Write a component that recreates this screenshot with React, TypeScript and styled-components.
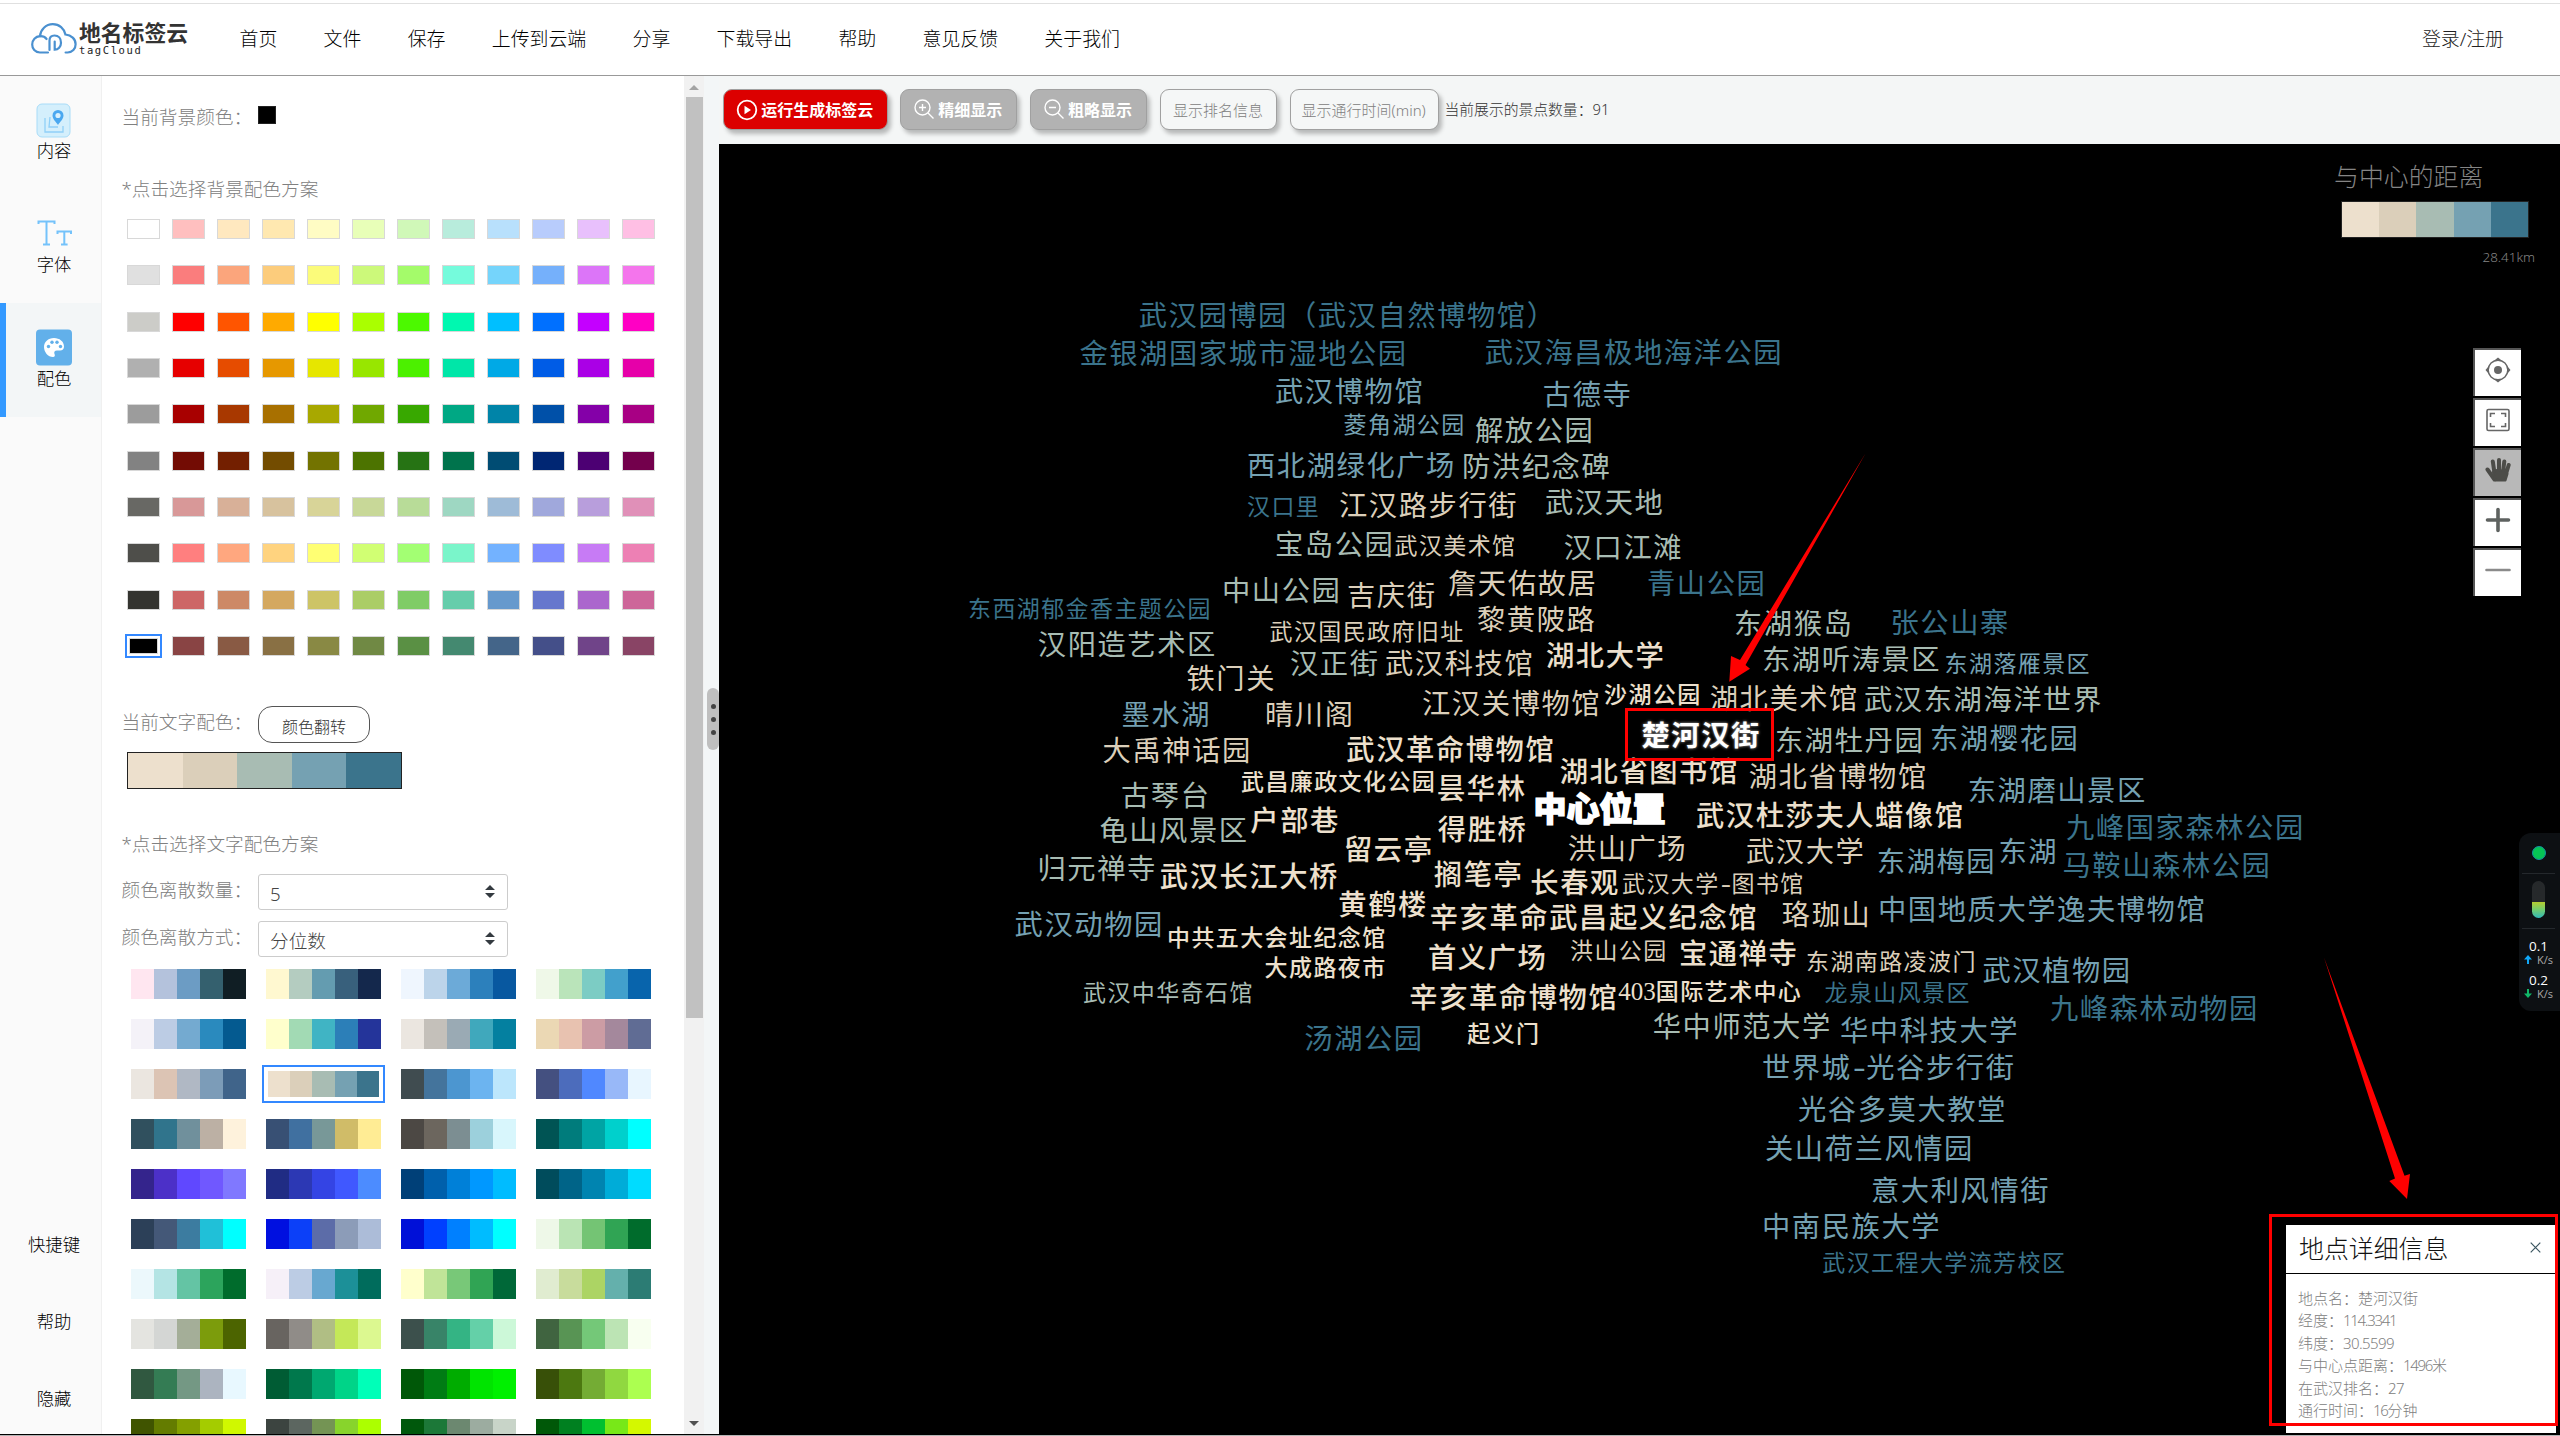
import React from "react";
import styled, { createGlobalStyle } from "styled-components";

const Global = createGlobalStyle`
  * { box-sizing: border-box; }
  html, body { margin: 0; padding: 0; }
  body {
    width: 2560px;
    height: 1436px;
    overflow: hidden;
    background: #fff;
    font-family: "Noto Sans", "Noto Sans CJK SC", sans-serif;
    font-weight: 300;
  }
`;

/* ---------- data ---------- */

const navItems = ["首页", "文件", "保存", "上传到云端", "分享", "下载导出", "帮助", "意见反馈", "关于我们"];

const backgrounds = [
  "#ffffff #ffbfbf #ffe8bf #ffe8b0 #fffcc4 #e8ffb8 #d0f8b8 #b8ecdc #b8e0fc #b8ccfc #e8c0fc #ffbfe4",
  "#e0e0e0 #fa7d7d #fba57c #fccc7c #fbfb7a #ccf97a #a4fb6a #75fbdc #75d4fb #75b0fb #dc75f8 #f475ec",
  "#ccccc8 #ff0000 #ff5500 #ffaa00 #ffff00 #aaff00 #4cf900 #00f8b0 #00bfff #0070ff #c400ff #ff00c4",
  "#b0b0b0 #e60000 #e64c00 #e69800 #e6e600 #98e600 #4cf000 #00e6a8 #00a9e6 #005ce6 #aa00e6 #e600a9",
  "#9c9c9c #a80000 #a83800 #a87000 #a8a800 #70a800 #38a800 #00a884 #0084a8 #0050a8 #8400a8 #a80084",
  "#828282 #730c04 #731f00 #734c00 #737300 #4c7300 #267314 #00734c #004c73 #002673 #4c0073 #73004c",
  "#686864 #d89898 #d8b098 #d7c29e #d8d498 #c8d898 #b8dc98 #9ed7c2 #9ebbd7 #a0a8dc #b89edc #e090b8",
  "#4e4e4a #ff7f7f #ffa77f #ffd37f #ffff73 #d1ff73 #a3ff73 #7af5ca #73b2ff #7f8cff #c77bf5 #ed80b4",
  "#343430 #cd6666 #cd8966 #d4a860 #cdc466 #abcd66 #80cc66 #66cdab #6699cd #6677cd #ab66cd #cd6699",
  "#000000 #894444 #895a44 #897044 #898944 #708944 #5a9044 #448970 #446589 #444f89 #704489 #894465",
].flatMap((row) => row.split(" "));

const current = ["#ede0cd", "#dbcfba", "#a8bcb3", "#75a1b2", "#3b748c"];

const palettes = [
  "#ffe6f0 #b4c2dc #6c9cc4 #34606e #101e24",
  "#fff8d0 #b4ccc0 #649cb0 #38607c #14284c",
  "#eff6fe #bcd4ea #6caad8 #2c80bc #0858a0",
  "#eff8e8 #bae4ba #7cccc4 #42a0cc #0864ac",
  "#f4f2f8 #bccce4 #74aad0 #2a8abe #045a90",
  "#ffffcc #a2dab4 #40b4c4 #2c7fb8 #24349a",
  "#ebe6e0 #c4c0ba #9aaab4 #40a8bc #0480a0",
  "#ebd8b4 #e8c2b0 #cc9ca4 #a4889c #606c94",
  "#ebe6e0 #dcc4b4 #b0b8c4 #7c9cb8 #40648a",
  "#ede0cd #dbcfba #a8bcb3 #75a1b2 #3b748c",
  "#404c50 #44749c #4c96d0 #6cb4f0 #bce6fc",
  "#445080 #4c6cbc #5088ff #98b8f8 #e8f6ff",
  "#30505e #30748c #70909c #bcb0a4 #fef2dc",
  "#385074 #4070a0 #789898 #d0bc68 #ffec94",
  "#4c4844 #6c665e #7c8e92 #9cd0dc #d8f6fc",
  "#005454 #007c7c #00a4a4 #00d0cc #00ffff",
  "#34248c #4c30c8 #6048ff #7058ff #8078ff",
  "#202c84 #2c38b4 #3444e4 #4058ff #4c8cff",
  "#004078 #0060ac #0080d8 #0098ff #00bcff",
  "#004c5c #006488 #0084b0 #00acd8 #00dcff",
  "#2c4058 #445878 #3c7ca0 #20c0d8 #00ffff",
  "#0010e0 #0c40f8 #5c6ca8 #8c9cb8 #acbcd8",
  "#0010d8 #0040ff #0080ff #00bcff #00ffff",
  "#eef8e8 #bae4b4 #74c474 #30a454 #006c2c",
  "#ecf8fc #b4e4e4 #64c4a4 #2ca45c #006c2c",
  "#f6f0f8 #bccce4 #68a8d0 #1c9098 #006c5c",
  "#ffffcc #c0e498 #78c878 #30a454 #006838",
  "#e0ecd0 #c8dc9c #acd464 #64b0ac #2c7c74",
  "#e4e4e0 #d4d6d4 #a4ae98 #7c9c0c #4c6400",
  "#686460 #908c88 #b0be84 #c4e858 #dcf890",
  "#3c504c #388468 #34b484 #64d0a8 #ccf8d8",
  "#406440 #589454 #74c878 #bce4b4 #f8fff0",
  "#305840 #347c54 #749884 #acb4c0 #e8f8ff",
  "#005c34 #00784c #00a870 #00d488 #00ffb8",
  "#005808 #007c14 #00ac00 #00e400 #00f000",
  "#385008 #4c7810 #74ac34 #90d840 #acff50",
  "#405400 #647c00 #84a000 #a4cc00 #d0f800",
  "#3c4440 #5c6660 #749454 #88d42c #acff00",
  "#00580c #1c7838 #6c8870 #9caca0 #c8d4c8",
  "#005808 #008020 #00c030 #78e818 #d4f800",
].map((p) => p.split(" "));

type Tone = "A" | "B" | "C" | "D" | "E";
const tones: Record<Tone, string> = { A: current[0], B: current[1], C: current[2], D: current[3], E: current[4] };

/* [name, left, vertical centre, tone, small?] */
const places: [string, number, number, Tone, boolean?][] = [
  ["武汉园博园（武汉自然博物馆）", 1139.7, 315, "E"],
  ["金银湖国家城市湿地公园", 1080.4, 353.3, "E"],
  ["武汉海昌极地海洋公园", 1485.7, 352.7, "E"],
  ["武汉博物馆", 1276, 391.7, "D"],
  ["古德寺", 1543.8, 394, "D"],
  ["菱角湖公园", 1344.6, 424.3, "D", true],
  ["解放公园", 1476, 430.7, "C"],
  ["西北湖绿化广场", 1248, 465.7, "D"],
  ["防洪纪念碑", 1463, 466.7, "C"],
  ["汉口里", 1248, 506.7, "E", true],
  ["江汉路步行街", 1340, 505.3, "B"],
  ["武汉天地", 1546, 502.7, "C"],
  ["宝岛公园", 1276, 544, "C"],
  ["武汉美术馆", 1395.5, 545.3, "B", true],
  ["汉口江滩", 1564.7, 547.7, "C"],
  ["中山公园", 1223, 590.7, "C"],
  ["吉庆街", 1348, 595.3, "B"],
  ["詹天佑故居", 1449, 583.3, "B"],
  ["青山公园", 1648, 583.7, "E"],
  ["东西湖郁金香主题公园", 969, 608.7, "E", true],
  ["武汉国民政府旧址", 1270.5, 631, "B", true],
  ["黎黄陂路", 1478, 619.7, "B"],
  ["汉阳造艺术区", 1038.8, 644, "C"],
  ["汉正街", 1291, 663.3, "C"],
  ["武汉科技馆", 1386, 663.3, "B"],
  ["湖北大学", 1547, 655, "A"],
  ["东湖猴岛", 1735, 623.3, "C"],
  ["张公山寨", 1891.500, 622, "E"],
  ["东湖听涛景区", 1763, 659.3, "C"],
  ["东湖落雁景区", 1945.6, 663.3, "D", true],
  ["铁门关", 1187.5, 678.3, "B"],
  ["墨水湖", 1122.500, 714, "D"],
  ["晴川阁", 1266, 714.3, "B"],
  ["江汉关博物馆", 1423, 703.3, "B"],
  ["沙湖公园", 1605, 694.7, "A", true],
  ["湖北美术馆", 1710.7, 698.3, "B"],
  ["武汉东湖海洋世界", 1865, 699.3, "C"],
  ["大禹神话园", 1103.6, 750, "B"],
  ["武汉革命博物馆", 1347.3, 749.3, "A"],
  ["东湖牡丹园", 1776, 740, "C"],
  ["东湖樱花园", 1931, 738.7, "D"],
  ["武昌廉政文化公园", 1242, 781, "A", true],
  ["昙华林", 1438, 788.7, "A"],
  ["湖北省图书馆", 1560.7, 771.7, "A"],
  ["湖北省博物馆", 1749.7, 776, "B"],
  ["古琴台", 1122, 795, "C"],
  ["东湖磨山景区", 1968.7, 790.3, "D"],
  ["户部巷", 1251.3, 820.3, "A"],
  ["得胜桥", 1438.8, 829.3, "A"],
  ["武汉杜莎夫人蜡像馆", 1697, 815.3, "A"],
  ["九峰国家森林公园", 2067, 827.3, "E"],
  ["龟山风景区", 1100.4, 830, "C"],
  ["留云亭", 1345, 849, "A"],
  ["洪山广场", 1568.8, 848.3, "B"],
  ["武汉大学", 1747, 851.3, "B"],
  ["东湖梅园", 1877.8, 861, "D"],
  ["东湖", 1999.5, 851.3, "D"],
  ["马鞍山森林公园", 2063.5, 865.3, "E"],
  ["归元禅寺", 1038.5, 868.3, "C"],
  ["武汉长江大桥", 1160.8, 876, "A"],
  ["搁笔亭", 1434.8, 874, "A"],
  ["长春观", 1531.3, 882.7, "A"],
  ["武汉大学-图书馆", 1623, 883, "B", true],
  ["黄鹤楼", 1339.3, 904.3, "A"],
  ["辛亥革命武昌起义纪念馆", 1430.8, 917, "A"],
  ["珞珈山", 1782.8, 914.7, "B"],
  ["中国地质大学逸夫博物馆", 1879, 909.7, "D"],
  ["武汉动物园", 1015.6, 924, "D"],
  ["中共五大会址纪念馆", 1168, 937.3, "A", true],
  ["大成路夜市", 1265.6, 967.3, "A", true],
  ["首义广场", 1429, 957.3, "A"],
  ["洪山公园", 1571, 950.3, "B", true],
  ["宝通禅寺", 1680, 953.7, "A"],
  ["东湖南路凌波门", 1807, 961, "B", true],
  ["武汉植物园", 1983.4, 970, "D"],
  ["武汉中华奇石馆", 1084, 992.7, "C", true],
  ["辛亥革命博物馆", 1410.3, 997.3, "A"],
  ["403国际艺术中心", 1619.3, 991, "A", true],
  ["龙泉山风景区", 1825.5, 992.3, "E", true],
  ["九峰森林动物园", 2051, 1008.3, "E"],
  ["汤湖公园", 1305.3, 1038, "E"],
  ["起义门", 1468.3, 1033.3, "A", true],
  ["华中师范大学", 1653.7, 1026.3, "C"],
  ["华中科技大学", 1841, 1030.7, "D"],
  ["世界城-光谷步行街", 1763, 1067.7, "D"],
  ["光谷多莫大教堂", 1799, 1109.3, "D"],
  ["关山荷兰风情园", 1766, 1148.3, "D"],
  ["意大利风情街", 1872, 1190, "D"],
  ["中南民族大学", 1763, 1226.7, "D"],
  ["武汉工程大学流芳校区", 1823.3, 1262.7, "E", true],
];

const details: [string, string, string?][] = [
  ["地点名：楚河汉街", ""],
  ["经度：", "114.3341"],
  ["纬度：", "30.5599"],
  ["与中心点距离：", "1496", "米"],
  ["在武汉排名：", "27"],
  ["通行时间：", "16", "分钟"],
];

/* ---------- shell ---------- */

const Page = styled.div`
  display: flex;
  flex-direction: column;
  width: 2560px;
  height: 1436px;
  overflow: hidden;
  border-bottom: 1px solid #b4b4b4;
  background: #fff;
`;
const Header = styled.header`
  display: flex;
  align-items: center;
  height: 73px;
  flex: none;
  margin-top: 3px;
  padding: 0 56px 0 31px;
  border-top: 1px solid #e0e0e0;
  border-bottom: 1px solid #999;
`;
const Logo = styled.div`
  display: flex;
  align-items: center;
  width: 208.5px;
  gap: 2px;
  margin-top: -3px;
`;
const LogoText = styled.div`
  display: flex;
  flex-direction: column;
`;
const LogoName = styled.span`
  font-size: 21.8px;
  line-height: 24px;
  font-weight: 700;
  color: #333;
`;
const LogoSub = styled.span`
  font-family: "DejaVu Sans Mono", monospace;
  font-size: 10.5px;
  line-height: 11px;
  letter-spacing: 1.6px;
  font-weight: 400;
  color: #222;
`;
const Nav = styled.nav`
  display: flex;
  gap: 46.3px;
  flex: 1;
  font-size: 18.9px;
  line-height: 26px;
  color: #000;
  margin-top: -2px;
`;
const Login = styled.span`
  font-size: 18.9px;
  line-height: 26px;
  color: #222;
  margin-top: -2px;
`;
const Body = styled.div`
  display: flex;
  flex: 1;
  min-height: 0;
  border-bottom: 1px solid #000;
`;

/* ---------- sidebar ---------- */

const Side = styled.aside`
  display: flex;
  flex-direction: column;
  justify-content: space-between;
  width: 102px;
  background: #fafafa;
  border-right: 1px solid #f0f0f0;
`;
const SideTop = styled.div`
  display: flex;
  flex-direction: column;
  margin-top: -1px;
`;
const SideItem = styled.div<{ $active?: boolean }>`
  display: flex;
  flex-direction: column;
  align-items: center;
  height: 114px;
  padding: 25px 0 0 ${(p) => (p.$active ? 1 : 7)}px;
  border-left: ${(p) => (p.$active ? "6px solid #3399ff" : "0")};
  background: ${(p) => (p.$active ? "#f3f6f7" : "transparent")};
  font-size: 17.33px;
  line-height: 24px;
  color: #000;
  svg { display: block; }
`;
const SideBottom = styled.div`
  display: flex;
  flex-direction: column;
  align-items: center;
  gap: 52.8px;
  padding: 0 0 24px 7px;
  font-size: 17.33px;
  line-height: 24px;
  color: #000;
`;

/* ---------- options panel ---------- */

const Panel = styled.section`
  display: flex;
  flex-direction: column;
  width: 582px;
  padding: 28px 0 0 19.5px;
  overflow: hidden;
  background: #fff;
`;
const Field = styled.div<{ $top?: number; $h: number; $shift?: number }>`
  display: flex;
  flex: none;
  height: ${(p) => p.$h}px;
  margin-top: ${(p) => p.$top ?? 0}px;
  > span {
    width: 136.5px;
    padding-top: ${(p) => p.$shift ?? 0}px;
    font-size: 18.67px;
    line-height: 26px;
    color: #808080;
  }
`;
const Caption = styled.div<{ $top: number }>`
  flex: none;
  margin-top: ${(p) => p.$top}px;
  font-size: 18.67px;
  line-height: 26px;
  color: #808080;
`;
const CurrentBg = styled.i`
  width: 18px;
  height: 18px;
  margin-top: 2px;
  background: #000;
  border: 1px solid #222;
`;
const SwatchGrid = styled.div`
  display: grid;
  flex: none;
  grid-template-columns: repeat(12, 33px);
  grid-auto-rows: 20px;
  gap: 26.33px 12px;
  margin: 17px 0 0 5.5px;
`;
const Swatch = styled.i<{ $c: string; $on?: boolean }>`
  background: ${(p) => p.$c};
  border: 1px solid #d8d8d8;
  margin: ${(p) => (p.$on ? "2px" : "0")};
  outline: ${(p) => (p.$on ? "2px solid #3388ff" : "none")};
  outline-offset: 2px;
`;
const FlipButton = styled.button`
  width: 112px;
  height: 37px;
  padding: 5px 0 0;
  border: 1px solid #555;
  border-radius: 14px;
  background: #fff;
  font: 300 16px/24px "Noto Sans", "Noto Sans CJK SC", sans-serif;
  color: #333;
`;
const Ramp = styled.div<{ $w: number; $h: number; $line?: boolean }>`
  display: flex;
  flex: none;
  width: ${(p) => p.$w}px;
  height: ${(p) => p.$h}px;
  border: ${(p) => (p.$line ? "1px solid #222" : "0")};
`;
const RampStop = styled.i<{ $c: string }>`
  flex: 1;
  background: ${(p) => p.$c};
`;
const CurrentRamp = styled.div`
  margin: 9px 0 0 5.5px;
`;
const Select = styled.div`
  display: flex;
  align-items: center;
  justify-content: space-between;
  width: 250px;
  height: 36px;
  padding: 4px 12px 0 11px;
  border: 1px solid #ccc;
  border-radius: 3px;
  font-size: 18.67px;
  line-height: 26px;
  color: #444;
  svg { margin-top: -4px; }
`;
const PaletteGrid = styled.div`
  display: grid;
  flex: none;
  grid-template-columns: repeat(4, 115px);
  grid-auto-rows: 30px;
  gap: 20px;
  margin: 12px 0 0 9.5px;
`;
const PaletteCell = styled.div<{ $on?: boolean }>`
  display: flex;
  align-items: center;
  justify-content: center;
  outline: ${(p) => (p.$on ? "2px solid #3388ff" : "none")};
  outline-offset: 2px;
`;

const Scroll = styled.div`
  display: flex;
  flex-direction: column;
  align-items: center;
  width: 20px;
  padding: 9px 0 8px;
  background: #f1f1f1;
`;
const Thumb = styled.div`
  width: 17px;
  height: 921px;
  margin: 7px 0 auto;
  background: #c1c1c1;
`;
const Tri = styled.i<{ $down?: boolean }>`
  border: 5px solid transparent;
  border-top: ${(p) => (p.$down ? "5px solid #505050" : "0")};
  border-bottom: ${(p) => (p.$down ? "0" : "5px solid #a3a3a3")};
`;
const Gutter = styled.div`
  display: flex;
  align-items: flex-start;
  justify-content: flex-end;
  width: 15px;
  padding-top: 612px;
  background: #f3f6f7;
`;
const Grip = styled.div`
  display: flex;
  flex-direction: column;
  align-items: center;
  justify-content: center;
  gap: 8px;
  width: 12px;
  height: 62px;
  border-radius: 6px;
  background: #bfbfbf;
  i { width: 5px; height: 5px; border-radius: 50%; background: #444; }
`;

/* ---------- stage ---------- */

const Main = styled.main`
  display: flex;
  flex-direction: column;
  flex: 1;
`;
const Toolbar = styled.div`
  display: flex;
  align-items: flex-start;
  height: 68px;
  padding: 13px 0 0 4px;
  background: #f4f6f6;
`;
const ToolButton = styled.button<{ $w: number; $kind: "run" | "solid" | "plain" }>`
  display: flex;
  align-items: center;
  justify-content: center;
  gap: 3px;
  width: ${(p) => p.$w}px;
  height: 41px;
  margin-right: 12.8px;
  padding: 0 1px 1px 0;
  border: 1px solid #a0a0a0;
  border-radius: 9px;
  box-shadow: 3px 4px 4px rgba(0, 0, 0, 0.25);
  background: ${(p) => ({ run: "#dc0000", solid: "#b2b2b2", plain: "#f5f7f7" })[p.$kind]};
  color: ${(p) => (p.$kind === "plain" ? "#808080" : "#fff")};
  font-family: "Noto Sans", "Noto Sans CJK SC", sans-serif;
  font-size: ${(p) => (p.$kind === "plain" ? 15 : 16)}px;
  font-weight: ${(p) => (p.$kind === "plain" ? 300 : 700)};
  white-space: nowrap;
  svg { margin-top: 1px; }
`;
const Count = styled.span`
  margin-left: -7px;
  padding-top: 8px;
  font-size: 14.8px;
  line-height: 24px;
  color: #333;
`;
const Canvas = styled.div`
  position: relative;
  flex: 1;
  overflow: hidden;
  background: #000;
`;
/* Labels carry page coordinates, the canvas begins at (719, 144). */
const Place = styled.span<{ $x: number; $y: number; $c: string; $small?: boolean; $near?: boolean }>`
  position: absolute;
  left: ${(p) => p.$x - 720}px;
  top: ${(p) => p.$y - 144 - 20.5}px;
  font-size: ${(p) => (p.$small ? 23 : 28.3)}px;
  letter-spacing: ${(p) => (p.$small ? 1.4 : 1.55)}px;
  line-height: 40px;
  font-weight: ${(p) => (p.$near ? 500 : 400)};
  white-space: nowrap;
  color: ${(p) => p.$c};
`;
const Digits = styled.span`
  font-family: "Liberation Serif", serif;
  font-size: 25px;
  letter-spacing: 0;
`;
const Dash = styled.span`
  display: inline-block;
  width: 0.52em;
  text-align: center;
  transform: scaleX(1.4);
  letter-spacing: 0;
`;
const Picked = styled(Place)`
  font-weight: 700;
  color: #fff;
  text-shadow: 0 0 3px rgba(255, 255, 255, 0.7);
`;
const Center = styled(Place)`
  font-size: 33px;
  letter-spacing: 0;
  font-weight: 900;
  color: #fff;
  -webkit-text-stroke: 1.5px #fff;
`;
const Frame = styled.div<{ $x: number; $y: number; $w: number; $h: number }>`
  position: absolute;
  left: ${(p) => p.$x - 719}px;
  top: ${(p) => p.$y - 144}px;
  width: ${(p) => p.$w}px;
  height: ${(p) => p.$h}px;
  border: 3px solid #f00;
`;
const Arrows = styled.svg`
  position: absolute;
  left: 0;
  top: 0;
  width: 1841px;
  height: 1290px;
  fill: #f00;
`;
const Legend = styled.div`
  position: absolute;
  right: 25px;
  top: 14px;
  width: 200px;
  display: flex;
  flex-direction: column;
  h3 {
    margin: 0 0 6px -1px;
    font-size: 24.9px;
    line-height: 37px;
    font-weight: 300;
    color: #858585;
  }
  > div { margin-left: 6px; }
  p {
    margin: 9px 0 0;
    text-align: right;
    font-size: 13.4px;
    line-height: 20px;
    color: #858585;
  }
`;
const MapTools = styled.div`
  position: absolute;
  left: 1754px;
  top: 204px;
  display: flex;
  flex-direction: column;
  gap: 2px;
`;
const MapTool = styled.button<{ $on?: boolean }>`
  display: flex;
  justify-content: center;
  width: 48px;
  height: 48px;
  padding: 7px 0 0;
  border: 0 solid #555;
  border-width: 2px 0 0 2px;
  background: ${(p) => (p.$on ? "#b8b8b8" : "#fff")};
`;
const Info = styled.div`
  position: absolute;
  left: 1567px;
  top: 1081px;
  width: 270px;
  height: 208px;
  background: #fff;
`;
const InfoHead = styled.div`
  display: flex;
  align-items: center;
  justify-content: space-between;
  height: 49px;
  padding: 0 15px 3px 13px;
  border-bottom: 1px solid #000;
  font-size: 24.9px;
  line-height: 36px;
  color: #111;
`;
const InfoBody = styled.div`
  display: flex;
  flex-direction: column;
  padding: 13px 0 0 12px;
  font-size: 15px;
  line-height: 22.4px;
  color: #808080;
`;
const Figure = styled.span<{ $tight: boolean }>`
  letter-spacing: ${(p) => (p.$tight ? -1.3 : -0.6)}px;
`;
const Meter = styled.div`
  position: absolute;
  right: 0;
  top: 689px;
  width: 41px;
  height: 178px;
  padding: 13px 2px 0 0;
  display: flex;
  flex-direction: column;
  align-items: center;
  border-radius: 12px 0 0 12px;
  background: #0d1013;
`;
const MeterDot = styled.i`
  width: 14px;
  height: 14px;
  border-radius: 50%;
  border: 1px solid #1490a0;
  background: #06c455;
`;
const MeterLine = styled.hr<{ $t: number; $b: number }>`
  width: 33px;
  height: 1px;
  border: 0;
  margin: ${(p) => p.$t}px 0 ${(p) => p.$b}px;
  background: #24282c;
`;
const Battery = styled.i`
  width: 13px;
  height: 37px;
  border-radius: 7px;
  background: linear-gradient(#26292b 57%, #b4cc30 57%, #70cc70 78%, #30b8b8);
`;
const Speed = styled.div`
  display: flex;
  flex-direction: column;
  align-items: center;
  height: 34px;
  font-family: "Open Sans", sans-serif;
  font-weight: 400;
  b { font-size: 13.5px; line-height: 14px; font-weight: 500; color: #fff; }
  span { display: flex; align-items: center; gap: 5px; font-size: 11px; line-height: 13px; color: #aaa; }
`;

/* ---------- pieces ---------- */

const RampBar = ({ colors, w, h, line }: { colors: string[]; w: number; h: number; line?: boolean }) => (
  <Ramp $w={w} $h={h} $line={line}>
    {colors.map((c, i) => <RampStop key={i} $c={c} />)}
  </Ramp>
);

const Sorter = () => (
  <svg width="10" height="13" viewBox="0 0 10 13" fill="#343a40">
    <path d="M5 0l5 5H0zM5 13l5-5H0z" />
  </svg>
);

const PlaceName = ({ text }: { text: string }) => (
  <>
    {text.split(/(\d+|-)/).map((part, i) =>
      part === "-" ? <Dash key={i}>-</Dash> : /^\d/.test(part) ? <Digits key={i}>{part}</Digits> : part
    )}
  </>
);

const Lens = ({ plus }: { plus?: boolean }) => (
  <svg width="21" height="21" viewBox="0 0 21 21" fill="none" stroke="#fff" strokeWidth="1.4">
    <circle cx="8.5" cy="8.5" r="7.5" />
    <path d={"M14 14l5.5 5.5M5 8.5h7" + (plus ? "M8.5 5v7" : "")} />
  </svg>
);

const SpeedRow = ({ value, up }: { value: string; up?: boolean }) => (
  <Speed>
    <b>{value}</b>
    <span>
      <svg width="8" height="9" viewBox="0 0 8 9" fill={up ? "#10a8f8" : "#10b868"}>
        <path d={up ? "M4 0l4 4.500H5V9H3V4.500H0z" : "M4 9l4-4.500H5V0H3v4.500H0z"} />
      </svg>
      K/s
    </span>
  </Speed>
);

export default function App() {
  return (
    <>
      <Global />
      <Page>
        <Header>
          <Logo>
            <svg width="46" height="31" viewBox="0 0 46 31" fill="none" stroke="#4a90d0" strokeWidth="2.2" strokeLinecap="round">
              <path d="M17 29.500H9C4 29.500 1.200 25.800 1.200 21.500c0-4.500 3.300-8 7.800-8.300C9.500 6.500 14.800 1.200 21.800 1.200c6.600 0 11.400 4.300 12.600 10.300 6 .5 10.200 4.600 10.200 9.700 0 4.700-3.200 8.300-8 8.300h-2" />
              <path d="M9 13.200c3.200-.2 5.200 1 6.600 2.800" />
              <path d="M18.500 27V17.500c0-3 2-5 5-5 4 0 6.500 3 6.500 7.200s-2.800 7-6.300 7V18.500" />
            </svg>
            <LogoText>
              <LogoName>地名标签云</LogoName>
              <LogoSub>tagCloud</LogoSub>
            </LogoText>
          </Logo>
          <Nav>{navItems.map((n) => <span key={n}>{n}</span>)}</Nav>
          <Login>登录/注册</Login>
        </Header>
        <Body>
          <Side>
            <SideTop>
              <SideItem>
                <svg width="36" height="38" viewBox="0 0 36 38">
                  <rect x="1" y="4" width="33" height="33" rx="5" fill="#d4effc" stroke="#a8dcf8" />
                  <path d="M9 18v14h18v-6M14 17l-1 10h9" fill="none" stroke="#90d0f8" strokeWidth="1.300" />
                  <path d="M22 10a5.500 5.500 0 0 1 5.500 5.500C27.500 19 24 22 22 25c-2-3-5.500-6-5.500-9.500A5.500 5.500 0 0 1 22 10z" fill="#4aa8f0" />
                  <circle cx="22" cy="15.500" r="2.600" fill="#d8f0fd" />
                </svg>
                内容
              </SideItem>
              <SideItem>
                <svg width="36" height="38" viewBox="0 0 36 38" fill="none" stroke="#74c2fa" strokeWidth="2">
                  <path d="M2.500 10V7.500h16V10M10.500 7.500v23M7 30.500h7M21.500 20v-2.500H35V20M28.300 17.500v13M25 30.500h6.600" />
                </svg>
                字体
              </SideItem>
              <SideItem $active>
                <svg width="36" height="38" viewBox="0 0 36 38">
                  <rect y="1.500" width="36" height="36" rx="4" fill="#62b0ea" />
                  <path d="M18 10c-6 0-10 4-10 9s4 10 9 10c2 0 2.200-1.700 1.500-3-.8-1.800.2-3.500 2.500-3.500h3c2.500 0 4-1.500 4-4 0-5-4.500-8.500-10-8.500z" fill="#fff" />
                  <g fill="#62b0ea"><circle cx="12.500" cy="18.500" r="1.700" /><circle cx="16" cy="14.300" r="1.700" /><circle cx="21" cy="14.300" r="1.700" /><circle cx="24.500" cy="18.500" r="1.700" /></g>
                </svg>
                配色
              </SideItem>
            </SideTop>
            <SideBottom>
              <span>快捷键</span>
              <span>帮助</span>
              <span>隐藏</span>
            </SideBottom>
          </Side>

          <Panel>
            <Field $h={26}>
              <span>当前背景颜色：</span>
              <CurrentBg />
            </Field>
            <Caption $top={46}>*点击选择背景配色方案</Caption>
            <SwatchGrid>
              {backgrounds.map((c, i) => <Swatch key={i} $c={c} $on={i === 108} />)}
            </SwatchGrid>
            <Field $h={37} $top={50} $shift={3}>
              <span>当前文字配色：</span>
              <FlipButton>颜色翻转</FlipButton>
            </Field>
            <CurrentRamp><RampBar colors={current} w={275} h={37} line /></CurrentRamp>
            <Caption $top={42}>*点击选择文字配色方案</Caption>
            <Field $h={36} $top={17} $shift={3}>
              <span>颜色离散数量：</span>
              <Select>5<Sorter /></Select>
            </Field>
            <Field $h={36} $top={11} $shift={3}>
              <span>颜色离散方式：</span>
              <Select>分位数<Sorter /></Select>
            </Field>
            <PaletteGrid>
              {palettes.map((p, i) => (
                <PaletteCell key={i} $on={i === 9}>
                  <RampBar colors={p} w={i === 9 ? 111 : 115} h={i === 9 ? 26 : 30} />
                </PaletteCell>
              ))}
            </PaletteGrid>
          </Panel>
          <Scroll>
            <Tri />
            <Thumb />
            <Tri $down />
          </Scroll>
          <Gutter>
            <Grip><i /><i /><i /></Grip>
          </Gutter>

          <Main>
            <Toolbar>
              <ToolButton $w={164.500} $kind="run">
                <svg width="22" height="22" viewBox="0 0 22 22">
                  <circle cx="11" cy="11" r="9.300" fill="none" stroke="#fff" strokeWidth="1.800" />
                  <path d="M8.500 6.800l6.500 4.200-6.500 4.200z" fill="#fff" />
                </svg>
                运行生成标签云
              </ToolButton>
              <ToolButton $w={117} $kind="solid"><Lens plus />精细显示</ToolButton>
              <ToolButton $w={117} $kind="solid"><Lens />粗略显示</ToolButton>
              <ToolButton $w={117} $kind="plain">显示排名信息</ToolButton>
              <ToolButton $w={149} $kind="plain">显示通行时间(min)</ToolButton>
              <Count>当前展示的景点数量：91</Count>
            </Toolbar>
            <Canvas>
              {places.map(([name, x, y, tone, small]) => (
                <Place key={name} $x={x} $y={y} $c={tones[tone]} $small={small} $near={tone === "A"}>
                  <PlaceName text={name} />
                </Place>
              ))}
              <Picked $x={1642.500} $y={735} $c="#fff">楚河汉街</Picked>
              <Center $x={1534.500} $y={809.500} $c="#fff">中心位置</Center>
              <Legend>
                <h3>与中心的距离</h3>
                <RampBar colors={current} w={188} h={37} line />
                <p>28.41km</p>
              </Legend>
              <MapTools>
                <MapTool>
                  <svg width="26" height="26" viewBox="0 0 26 26" fill="#666">
                    <circle cx="13" cy="13" r="9.800" fill="none" stroke="#666" strokeWidth="1.400" />
                    <circle cx="13" cy="13" r="4" />
                    <path d="M13 .5l4 3.300H9zM13 25.500l4-3.300H9zM.5 13l3.300-4v8zM25.500 13l-3.300-4v8z" />
                  </svg>
                </MapTool>
                <MapTool>
                  <svg width="26" height="26" viewBox="0 0 26 26" fill="none" stroke="#666">
                    <rect x="2" y="2.500" width="22" height="21" rx="1.500" strokeWidth="1.600" />
                    <path d="M5.500 10V6.500h4.500M16 6.500h4.500V10M5.500 16v3.500h4.500M16 19.500h4.500V16" strokeWidth="1.600" />
                  </svg>
                </MapTool>
                <MapTool $on>
                  <svg width="26" height="26" viewBox="0 0 26 26" fill="none" stroke="#4c4c48" strokeLinecap="round">
                    <path d="M9.500 22.500L2.500 12.500" strokeWidth="4" />
                    <path d="M9.500 16L7.800 4.500M14 14V3M18 15l1.300-10.500M21 17l2.700-9" strokeWidth="4" />
                    <path d="M8 15l4-2 9 1 1.500 3-2 6.500H10.500z" fill="#4c4c48" strokeWidth="2" strokeLinejoin="round" />
                  </svg>
                </MapTool>
                <MapTool>
                  <svg width="26" height="26" viewBox="0 0 26 26" stroke="#5e6260" strokeWidth="3.600" strokeLinecap="round">
                    <path d="M2.500 13h21M13 2.500v21" />
                  </svg>
                </MapTool>
                <MapTool>
                  <svg width="26" height="26" viewBox="0 0 26 26" stroke="#8a8a8a" strokeWidth="2.600" strokeLinecap="round">
                    <path d="M1.500 13h23" />
                  </svg>
                </MapTool>
              </MapTools>
              <Info>
                <InfoHead>
                  <span>地点详细信息</span>
                  <svg width="11" height="11" viewBox="0 0 11 11" stroke="#3a5560" strokeWidth="1.200">
                    <path d="M.7.7l9.600 9.600M10.300.7L.7 10.300" />
                  </svg>
                </InfoHead>
                <InfoBody>
                  {details.map(([label, figure, unit]) => (
                    <span key={label}>
                      {label}
                      <Figure $tight={figure.startsWith("1")}>{figure}</Figure>
                      {unit}
                    </span>
                  ))}
                </InfoBody>
              </Info>
              <Meter>
                <MeterDot />
                <MeterLine $t={13} $b={7} />
                <Battery />
                <MeterLine $t={10} $b={10} />
                <SpeedRow value="0.1" up />
                <SpeedRow value="0.2" />
              </Meter>
              <Frame $x={1625} $y={708} $w={149} $h={53} />
              <Frame $x={2269} $y={1214} $w={289} $h={212} />
              <Arrows viewBox="719 144 1841 1290">
                <path d="M1865.600 453.300L1740 660L1731 656L1729.300 681.700L1750 668.700L1745.500 665Z" />
                <path d="M2324 957.500L2395 1178.500L2389.300 1181L2407 1199L2410 1174L2404.500 1175.800Z" />
              </Arrows>
            </Canvas>
          </Main>
        </Body>
      </Page>
    </>
  );
}
